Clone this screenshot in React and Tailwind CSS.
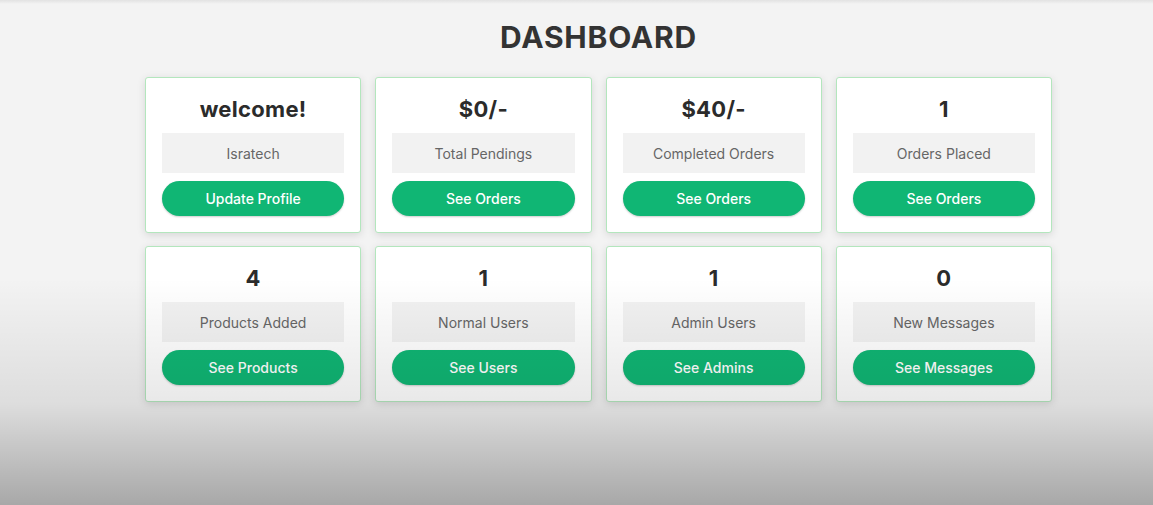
const cards = [
    { title: "welcome!", label: "Isratech", button: "Update Profile" },
    { title: "$0/-", label: "Total Pendings", button: "See Orders" },
    { title: "$40/-", label: "Completed Orders", button: "See Orders" },
    { title: "1", label: "Orders Placed", button: "See Orders" },
    { title: "4", label: "Products Added", button: "See Products" },
    { title: "1", label: "Normal Users", button: "See Users" },
    { title: "1", label: "Admin Users", button: "See Admins" },
    { title: "0", label: "New Messages", button: "See Messages" },
];

function StatCard({ title, label, button }) {
    return (
        <div className="bg-white border border-[#b3e6bd] rounded-[3px] shadow-[0_2px_8px_rgba(0,0,0,0.12)] px-[16px] pt-[17px] pb-[16px] flex flex-col">
            <h3 className="text-center text-[22px] leading-[28px] font-bold tracking-[0.3px] text-[#2b2b2b]">{title}</h3>
            <div className="mt-[10px] h-[40px] bg-[#f2f2f2] flex items-center justify-center text-[14px] text-[#666]">{label}</div>
            <button className="mt-[8px] h-[35px] rounded-full bg-[#10b674] text-white text-[14px] font-medium shadow-[0_1px_2px_rgba(0,0,0,0.2)]">
                {button}
            </button>
        </div>
    );
}

export default function App() {
    return (
        <div className="relative h-[505px] w-full overflow-hidden bg-[#f3f3f3] font-['Inter',sans-serif]">
            {/* top strip */}
            <div className="h-[4px] bg-linear-to-b from-[#e2e2e2] to-[#f3f3f3]" />

            <div className="pl-[44px]">
                <h1 className="mt-[15px] text-center text-[30px] leading-[36px] font-bold tracking-[0.8px] text-[#333]">DASHBOARD</h1>

                <div className="mt-[22px] mx-auto w-[907px] grid grid-cols-4 gap-x-[14px] gap-y-[13px]">
                    {cards.map((c, i) => (
                        <StatCard key={i} {...c} />
                    ))}
                </div>
            </div>

            {/* video vignette */}
            <div className="pointer-events-none absolute inset-0 bg-linear-to-b from-transparent from-[55%] via-black/[0.09] via-[80%] to-black/[0.31]" />
        </div>
    );
}
